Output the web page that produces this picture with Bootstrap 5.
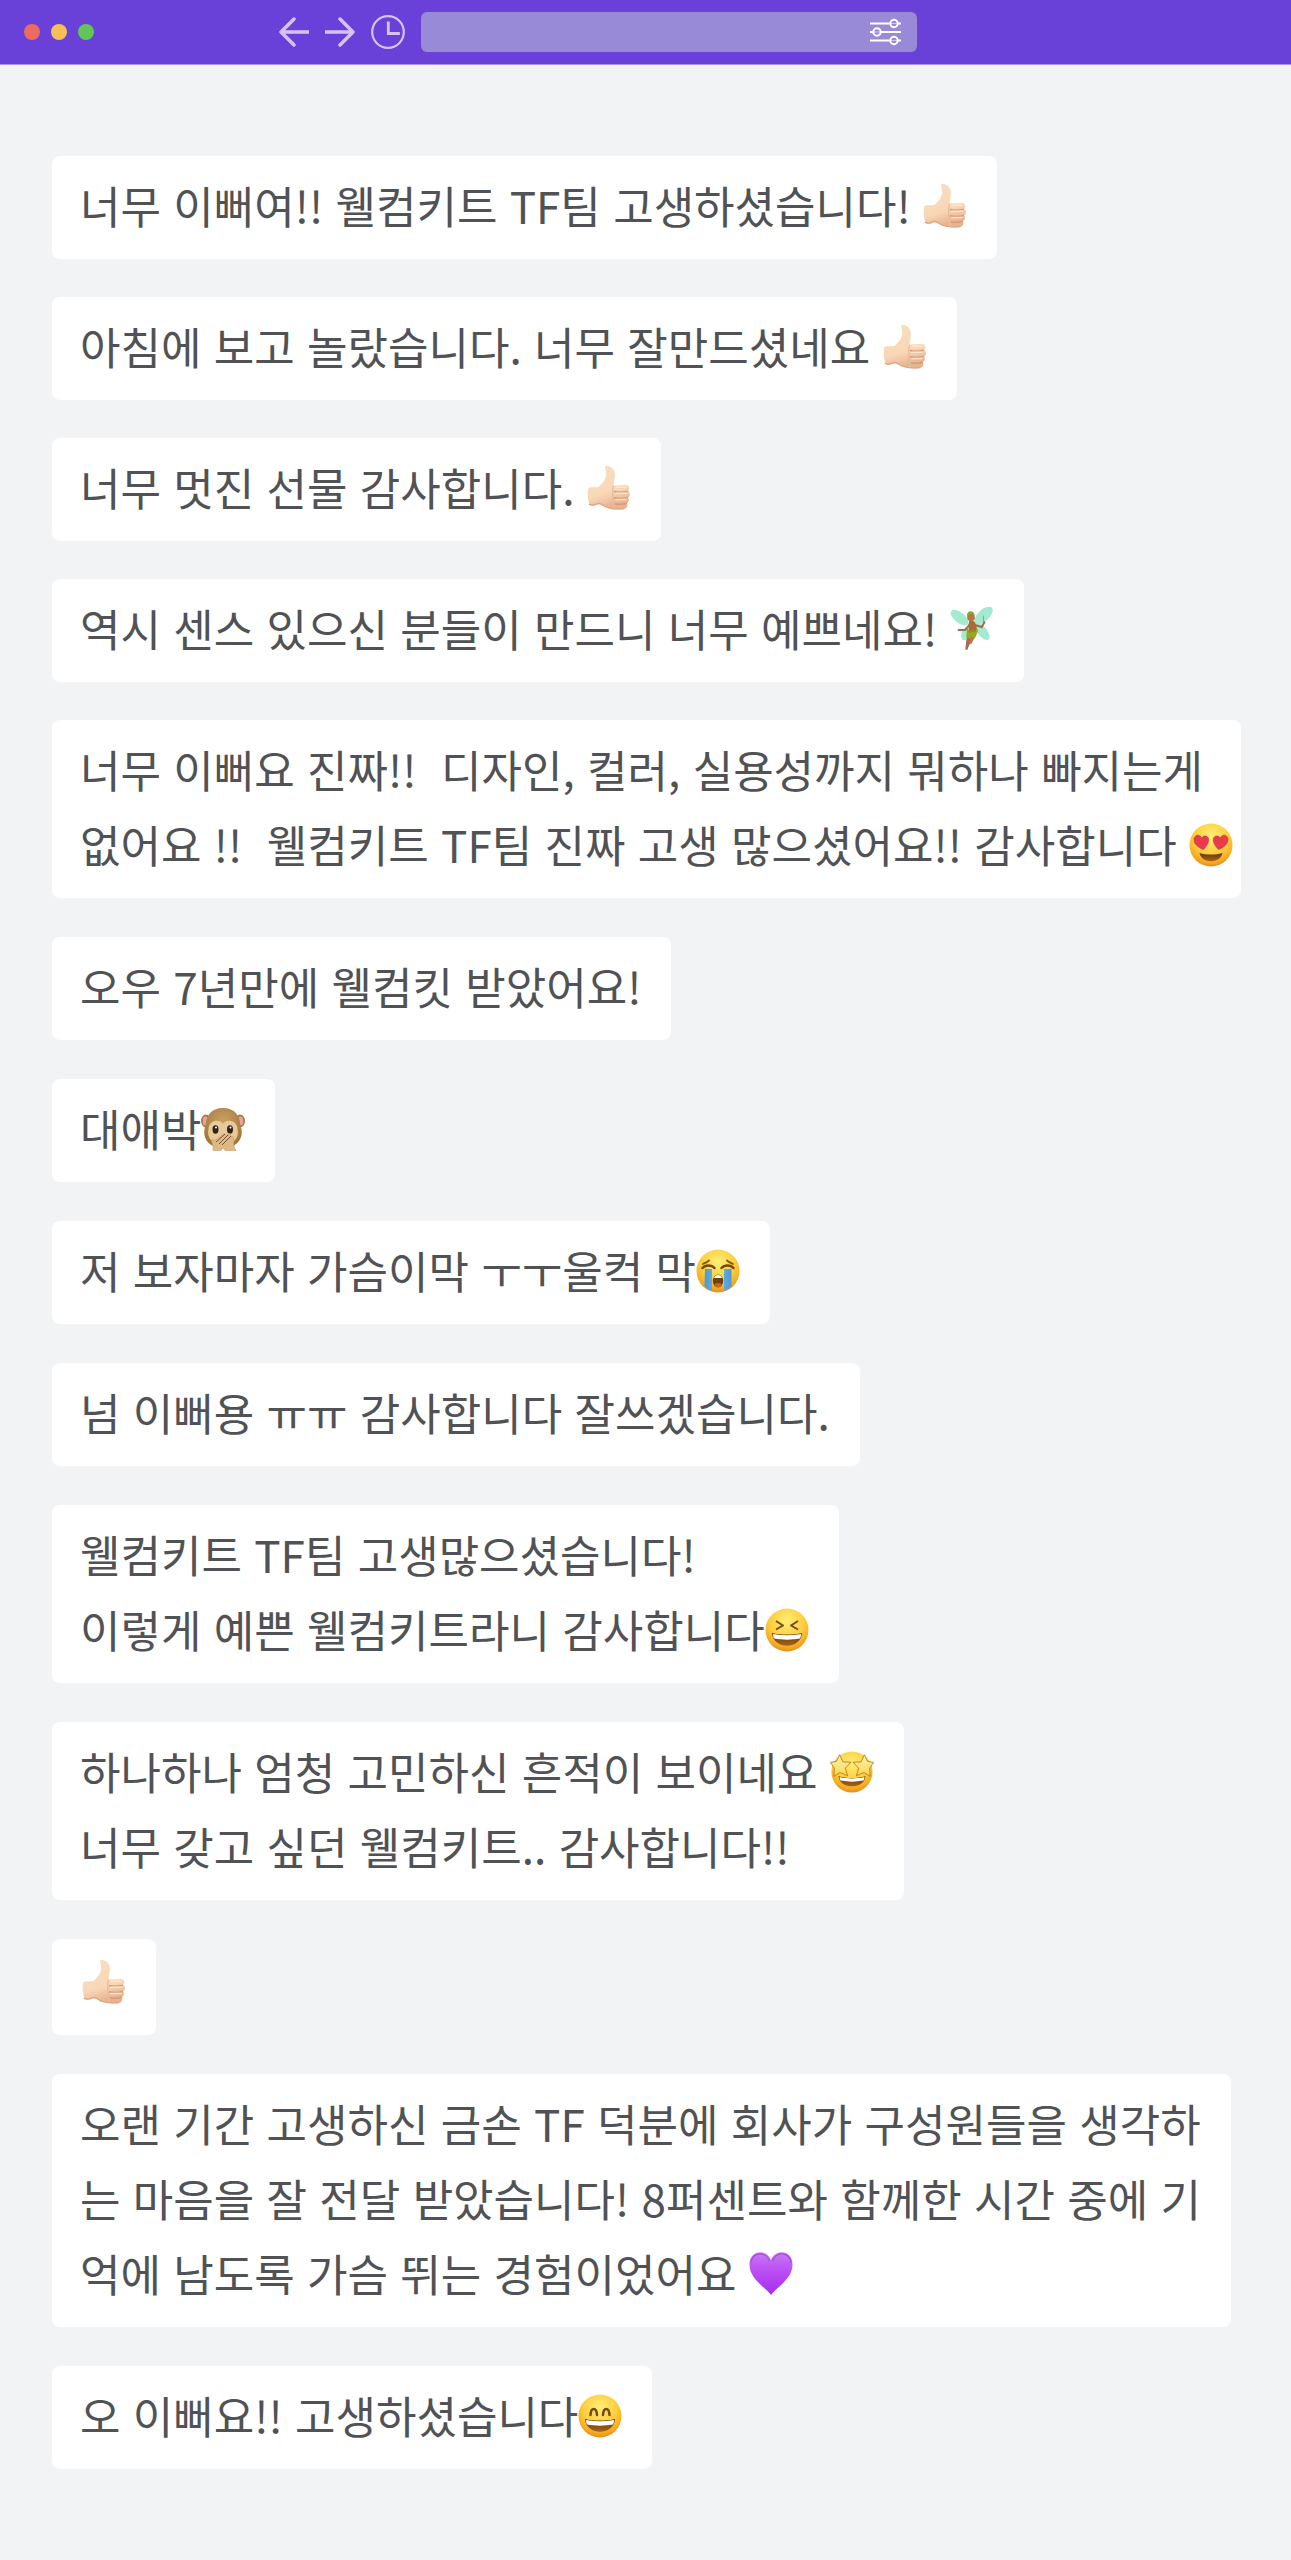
<!DOCTYPE html>
<html lang="ko">
<head>
<meta charset="utf-8">
<meta name="viewport" content="width=device-width, initial-scale=1">
<title>웰컴키트 후기</title>
<link href="https://cdn.jsdelivr.net/npm/bootstrap@5.3.0/dist/css/bootstrap.min.css" rel="stylesheet">
<style>
body { background: #f2f3f5; color: #505255; font-family: "Noto Sans CJK KR", sans-serif; }
.browser-bar { height: 65px; background: #6941d8; border-bottom: 1px solid #a996e2; padding-left: 24px; }
.dots { gap: 11px; margin-right: 185px; }
.dot { width: 16px; height: 16px; border-radius: 50%; }
.dot-red { background: #ed6b60; }
.dot-yellow { background: #f5bf58; }
.dot-green { background: #62c656; }
.tool-btn { color: #d8c2fa; line-height: 0; }
.address { width: 496px; height: 40px; border-radius: 6px; background: #998ad8; color: #fff; }
.address input { color: #fff; }
.address input:focus { background: transparent; box-shadow: none; }
.reviews { padding: 91px 40px 86px 52px; }
.bubble { background: #fff; border-radius: 8px; padding: 12px 30px 16px 28px; margin-bottom: 39px; font-size: 44px; line-height: 75px; max-width: 100%; word-break: break-all; }
.bubble:nth-child(-n+4) { margin-bottom: 38px; }
.bubble:last-child { margin-bottom: 0; }
.bubble-wide { padding-right: 8px; }
.bubble-icon { padding: 21px 30px 31px; line-height: 0; }
.emoji { width: 44px; height: 44px; vertical-align: -4px; flex: none; }
.bubble-icon .emoji { vertical-align: top; }
</style>
<script src="https://cdn.jsdelivr.net/npm/bootstrap@5.3.0/dist/js/bootstrap.bundle.min.js"></script>
</head>
<body>
<svg width="0" height="0" class="position-absolute" aria-hidden="true">
  <defs>
    <radialGradient id="face" cx=".5" cy=".3" r=".72"><stop offset="0" stop-color="#ffee78"/><stop offset=".55" stop-color="#fdce3e"/><stop offset=".85" stop-color="#f5a81f"/><stop offset="1" stop-color="#dd8520"/></radialGradient>
    <linearGradient id="skin" x1="0" y1="0" x2=".3" y2="1"><stop offset="0" stop-color="#f9dfc0"/><stop offset=".7" stop-color="#f8d7b7"/><stop offset="1" stop-color="#e8b391"/></linearGradient>
    <linearGradient id="violet" x1="0" y1="0" x2="0" y2="1"><stop offset="0" stop-color="#c87bf3"/><stop offset=".35" stop-color="#bd54f5"/><stop offset="1" stop-color="#a92df0"/></linearGradient>
    <linearGradient id="starfill" x1="0" y1="0" x2="0" y2="1"><stop offset="0" stop-color="#fff6b4"/><stop offset="1" stop-color="#fbd44c"/></linearGradient>
    <linearGradient id="mouth" x1="0" y1="0" x2="0" y2="1"><stop offset="0" stop-color="#5f370f"/><stop offset="1" stop-color="#a86416"/></linearGradient>
    <linearGradient id="tear" x1="0" y1="0" x2="1" y2="0"><stop offset="0" stop-color="#4a98d8"/><stop offset=".5" stop-color="#6bbcf0"/><stop offset="1" stop-color="#4a98d8"/></linearGradient>
    <radialGradient id="fur" cx=".5" cy=".35" r=".65"><stop offset="0" stop-color="#c9a064"/><stop offset="1" stop-color="#a3763b"/></radialGradient>
  </defs>
  <symbol id="thumb" viewBox="0 0 44 44">
    <path d="M1.500 22C4 20.500 9 22 12 20.500c4-3.500 7-7.500 7.200-12C19.300 4 17 1 18.500 .3c3-1 8 1.500 9 5.700 1.200 5-1 10-.8 13.500L39 19c3.500 0 4.500 4.500 1.800 6 3 1.200 2.700 5.500 0 6.300 2 1.700 1.200 5-1 5.700 1.500 2.500 0 5.500-2.500 6-6 1-13 .5-18-1.500C16 40 14 38 11 38.500c-2.500.8-5 2-7.500 1C.5 36 0 26 1.500 22Z" fill="url(#skin)"/>
    <path d="M2 38c2 2 6 1 9-.5 3-.5 5 2 8 3.500 5 2 12 2.300 18 1.600" fill="none" stroke="#dca583" stroke-width="1.200"/>
    <path d="M26.700 20c-1.200 2-1 4-1 6 0 5 .3 11 1.500 16" fill="none" stroke="#e9bc99" stroke-width="1.300"/>
    <path d="M27 25.500c4 1 10 .7 14-.4M27 31.800c5 1 10 .7 14-.4M28 37.700c4 .9 8.500.6 12-.5" fill="none" stroke="#d89b78" stroke-width="1.500"/>
    <path d="M29 21.300h10M29 27.300h10.500M29 33.500h10" stroke="#ffe5c9" stroke-width="1.500" stroke-linecap="round"/>
  </symbol>
  <symbol id="fairy" viewBox="0 0 46 46">
    <g fill="#a4ead0"><ellipse cx="10" cy="11" rx="11" ry="5.500" transform="rotate(38 10 11)"/><ellipse cx="35" cy="9" rx="12" ry="6" transform="rotate(-43 35 9)"/><ellipse cx="34" cy="26" rx="10" ry="5" transform="rotate(52 34 26)"/><ellipse cx="16" cy="28" rx="4" ry="7" transform="rotate(15 16 28)"/></g>
    <path d="M20 15c3-2 6 0 7 3l2 8-8 3-2-9Z" fill="#a66b3a"/>
    <path d="M20 19 16 24 9 24M27 19l6 2 3-5" fill="none" stroke="#a9694c" stroke-width="2.200" stroke-linecap="round" stroke-linejoin="round"/>
    <path d="M35 9v7" stroke="#c1933f" stroke-width="1"/>
    <path d="M18 30h6l-3 8-3 7-2-.5.8-8Z" fill="#a96a50"/><path d="m21 30 6 0-5 9-2-1Z" fill="#b97453"/>
    <path d="m18 20 2 6 7-1 1-4 1 5-3 7-3-2-3 2-3-2Z" fill="#8fae1d"/><path d="m19 24 7-1 1 3-7 1Z" fill="#b47629"/>
    <circle cx="22" cy="11" r="4" fill="#b27a43"/><path d="M18 11c-2-8 8-9 8-1-2-4-6-4-8 1Z" fill="#79ad27"/>
  </symbol>
  <symbol id="hearts" viewBox="0 0 44 44">
    <circle cx="22" cy="22" r="21.500" fill="url(#face)"/>
    <path d="M14.500 26.500C9 24.500 5 21 5 16.500c0-5 6-6 7.600-1.500 3-4 8-1.500 7 3-.6 3-2.600 6-5.100 8.500Z" fill="#e93b4d" stroke="#bf3146" stroke-width=".6"/>
    <path d="M29.500 26.500c5.500-2 9.500-5.500 9.500-10 0-5-6-6-7.600-1.500-3-4-8-1.500-7 3 .6 3 2.600 6 5.100 8.500Z" fill="#e93b4d" stroke="#bf3146" stroke-width=".6"/>
    <path d="M10.500 30c7 2 16 2 23 0C31.500 41 12.500 41 10.500 30Z" fill="url(#mouth)"/>
  </symbol>
  <symbol id="monkey" viewBox="0 0 44 44">
    <ellipse cx="5" cy="14" rx="5" ry="6.500" fill="#a97b42"/><ellipse cx="39" cy="14" rx="5" ry="6.500" fill="#a97b42"/>
    <ellipse cx="4.500" cy="14" rx="2.700" ry="4.500" fill="#e7a49b"/><ellipse cx="39.500" cy="14" rx="2.700" ry="4.500" fill="#e7a49b"/>
    <path d="M22 1C10 1 5 9 4.500 19 1 27 5 36 12 39h20c7-3 11-12 7.500-20C39 9 34 1 22 1Z" fill="url(#fur)"/>
    <path d="M22 17c-2-5-14-5-14.500 5C5.500 30 11 38 22 38s16.500-8 14.500-16C36 12 24 12 22 17Z" fill="#e6ca98"/>
    <ellipse cx="14.500" cy="22.500" rx="3" ry="4.200" fill="#33221c"/><ellipse cx="29" cy="22.500" rx="3" ry="4.200" fill="#33221c"/><circle cx="15" cy="20.500" r="1" fill="#fff"/><circle cx="29.500" cy="20.500" r="1" fill="#fff"/>
    <path d="M12 43.500c1-5-2-8-1-11l3 1 9-7 2 2 4-2 1 3 2 0c2 4-1 8 3 14H24l-2-3-2 3Z" fill="#ddb984" stroke="#c59b65" stroke-width=".6"/>
    <path d="m15 35 9-8M18 37l9-9M21 38l9-9" fill="none" stroke="#765337" stroke-width="1"/>
  </symbol>
  <symbol id="sob" viewBox="0 0 44 44">
    <circle cx="22" cy="22" r="21.500" fill="url(#face)"/>
    <path d="M6.500 19c3-3.500 9-3.500 12 0M25.500 19c3-3.500 9-3.500 12 0" stroke="#784712" stroke-width="2.500" fill="none" stroke-linecap="round"/>
    <path d="M7 15c2-1 4.500-2 6-3.500M37 15c-2-1-4.500-2-6-3.500" stroke="#885817" stroke-width="1.800" fill="none" stroke-linecap="round"/>
    <path d="M9 20h7v22c-3-1-5.500-3-7.500-5ZM28 20h7.500v17c-2 2-4.500 4-7.500 5Z" fill="url(#tear)"/>
    <ellipse cx="22" cy="32" rx="5.200" ry="6.500" fill="#714010"/><path d="M18 29c1-4 7-4 8 0Z" fill="#fff"/><ellipse cx="22" cy="36" rx="3.500" ry="2" fill="#bd6c22"/>
  </symbol>
  <symbol id="laugh" viewBox="0 0 44 44">
    <circle cx="22" cy="22" r="21.500" fill="url(#face)"/>
    <path d="m11 13 7 4.500-7 4M33 13l-7 4.500 7 4" fill="none" stroke="#784a14" stroke-width="2" stroke-linejoin="round"/>
    <path d="M7 25c9 2 21 2 30 0-1 17-29 17-30 0Z" fill="url(#mouth)"/><path d="M8 26c9 1.700 19 1.700 28 0 0 2-.5 3.500-1.200 4.500-8 1.500-17.600 1.500-25.600 0C8.500 29.500 8 28 8 26Z" fill="#fff"/>
  </symbol>
  <symbol id="smile" viewBox="0 0 44 44">
    <circle cx="22" cy="22" r="21.500" fill="url(#face)"/>
    <path d="M12.500 21c.5-8 6-8 6.500 0M25 21c.5-8 6-8 6.500 0" fill="none" stroke="#784a14" stroke-width="2.500" stroke-linecap="round"/>
    <path d="M7 25c9 2 21 2 30 0-1 17-29 17-30 0Z" fill="url(#mouth)"/><path d="M8 26c9 1.700 19 1.700 28 0 0 2-.5 3.500-1.200 4.500-8 1.500-17.600 1.500-25.600 0C8.500 29.500 8 28 8 26Z" fill="#fff"/>
  </symbol>
  <symbol id="starry" viewBox="0 0 46 44">
    <circle cx="23" cy="22" r="21.500" fill="url(#face)"/>
    <path d="M9 26.500c8 2.500 20 2.500 28 0-1 14-27 14-28 0Z" fill="url(#mouth)"/><path d="M10 27.200c8 2 18 2 26 0 0 2-.5 3-1 3.800-8 1.500-16 1.500-24 0-.5-.8-1-1.800-1-3.800Z" fill="#fff"/>
    <path d="m10 4 3.500 7.500 8.500 .2-6 6.300 2.500 8-8-3.500L4 26.500l.5-8.500L.5 12l6.300-1.200Z" fill="url(#starfill)" stroke="#b9761a" stroke-width=".9" stroke-linejoin="round"/>
    <path d="m36 4-3.500 7.500-8.500 .2 6 6.300-2.500 8 8-3.500 6.500 4-.5-8.500 4-6-6.300-1.200Z" fill="url(#starfill)" stroke="#b9761a" stroke-width=".9" stroke-linejoin="round"/>
  </symbol>
  <symbol id="purple" viewBox="0 0 44 44">
    <path d="M22 43C16 35 .5 27 .5 12.500.5-2 17.500-3.500 22 8 26.500-3.500 43.500-2 43.500 12.500 43.500 27 28 35 22 43Z" fill="url(#violet)"/>
    <path d="M2 11C3.500-.5 17-1 20.500 9M23.500 9C27-1 40.500-.5 42 11" fill="none" stroke="#a848dc" stroke-width="1.200"/>
  </symbol>
</svg>

<header class="browser-bar d-flex align-items-center">
  <div class="dots d-flex flex-shrink-0"><span class="dot dot-red"></span><span class="dot dot-yellow"></span><span class="dot dot-green"></span></div>
  <button type="button" class="tool-btn btn p-0 border-0 me-3" aria-label="뒤로"><svg width="30" height="30" viewBox="0 0 30 30" fill="none" stroke="currentColor" stroke-width="3.500"><path d="M30 15H3"/><path d="M15 2 2 15l13 13" stroke-linecap="round" stroke-linejoin="round"/></svg></button>
  <button type="button" class="tool-btn btn p-0 border-0 me-3" aria-label="앞으로"><svg width="30" height="30" viewBox="0 0 30 30" fill="none" stroke="currentColor" stroke-width="3.500"><path d="M0 15h27"/><path d="m15 2 13 13-13 13" stroke-linecap="round" stroke-linejoin="round"/></svg></button>
  <button type="button" class="tool-btn btn p-0 border-0 me-3" aria-label="방문 기록"><svg width="34" height="34" viewBox="0 0 34 34" fill="none" stroke="currentColor"><circle cx="17" cy="17" r="15.800" stroke-width="2.200"/><path d="M17.300 6.500v12h11.500" stroke-width="2.800"/></svg></button>
  <div class="address d-flex align-items-center pe-3">
    <input type="text" class="form-control h-100 border-0 bg-transparent" aria-label="주소">
    <button type="button" class="btn p-0 border-0 text-white lh-1" aria-label="설정"><svg class="d-block" width="31" height="28" viewBox="0 0 31 28" fill="none" stroke="currentColor" stroke-width="2"><path d="M0 5.500h31M0 14h31M0 22.500h31"/><g fill="#998ad8"><circle cx="24" cy="5.500" r="3.700"/><circle cx="7" cy="14" r="3.700"/><circle cx="24" cy="22.500" r="3.700"/></g><path d="M21 5.500h6M4 14h6M21 22.500h6" stroke-width="1" opacity=".5"/></svg></button>
  </div>
</header>

<main class="reviews d-flex flex-column align-items-start">
  <div class="bubble">너무 이뻐여!! 웰컴키트 TF팀 고생하셨습니다! <svg class="emoji" role="img" aria-label="엄지"><use href="#thumb"/></svg></div>
  <div class="bubble">아침에 보고 놀랐습니다. 너무 잘만드셨네요 <svg class="emoji" role="img" aria-label="엄지"><use href="#thumb"/></svg></div>
  <div class="bubble">너무 멋진 선물 감사합니다. <svg class="emoji" role="img" aria-label="엄지"><use href="#thumb"/></svg></div>
  <div class="bubble">역시 센스 있으신 분들이 만드니 너무 예쁘네요! <svg class="emoji" role="img" aria-label="요정"><use href="#fairy"/></svg></div>
  <div class="bubble bubble-wide">너무 이뻐요 진짜!!&nbsp; 디자인, 컬러, 실용성까지 뭐하나 빠지는게<br>없어요 !!&nbsp; 웰컴키트 TF팀 진짜 고생 많으셨어요!! 감사합니다 <svg class="emoji" role="img" aria-label="하트 눈"><use href="#hearts"/></svg></div>
  <div class="bubble">오우 7년만에 웰컴킷 받았어요!</div>
  <div class="bubble">대애박<svg class="emoji" role="img" aria-label="원숭이"><use href="#monkey"/></svg></div>
  <div class="bubble">저 보자마자 가슴이막 ㅜㅜ울컥 막<svg class="emoji" role="img" aria-label="눈물"><use href="#sob"/></svg></div>
  <div class="bubble">넘 이뻐용 ㅠㅠ 감사합니다 잘쓰겠습니다.</div>
  <div class="bubble">웰컴키트 TF팀 고생많으셨습니다!<br>이렇게 예쁜 웰컴키트라니 감사합니다<svg class="emoji" role="img" aria-label="웃음"><use href="#laugh"/></svg></div>
  <div class="bubble">하나하나 엄청 고민하신 흔적이 보이네요 <svg class="emoji" role="img" aria-label="별 눈"><use href="#starry"/></svg><br>너무 갖고 싶던 웰컴키트.. 감사합니다!!</div>
  <div class="bubble bubble-icon"><svg class="emoji" role="img" aria-label="엄지"><use href="#thumb"/></svg></div>
  <div class="bubble">오랜 기간 고생하신 금손 TF 덕분에 회사가 구성원들을 생각하<br>는 마음을 잘 전달 받았습니다! 8퍼센트와 함께한 시간 중에 기<br>억에 남도록 가슴 뛰는 경험이었어요 <svg class="emoji" role="img" aria-label="보라 하트"><use href="#purple"/></svg></div>
  <div class="bubble">오 이뻐요!! 고생하셨습니다<svg class="emoji" role="img" aria-label="미소"><use href="#smile"/></svg></div>
</main>
</body>
</html>
